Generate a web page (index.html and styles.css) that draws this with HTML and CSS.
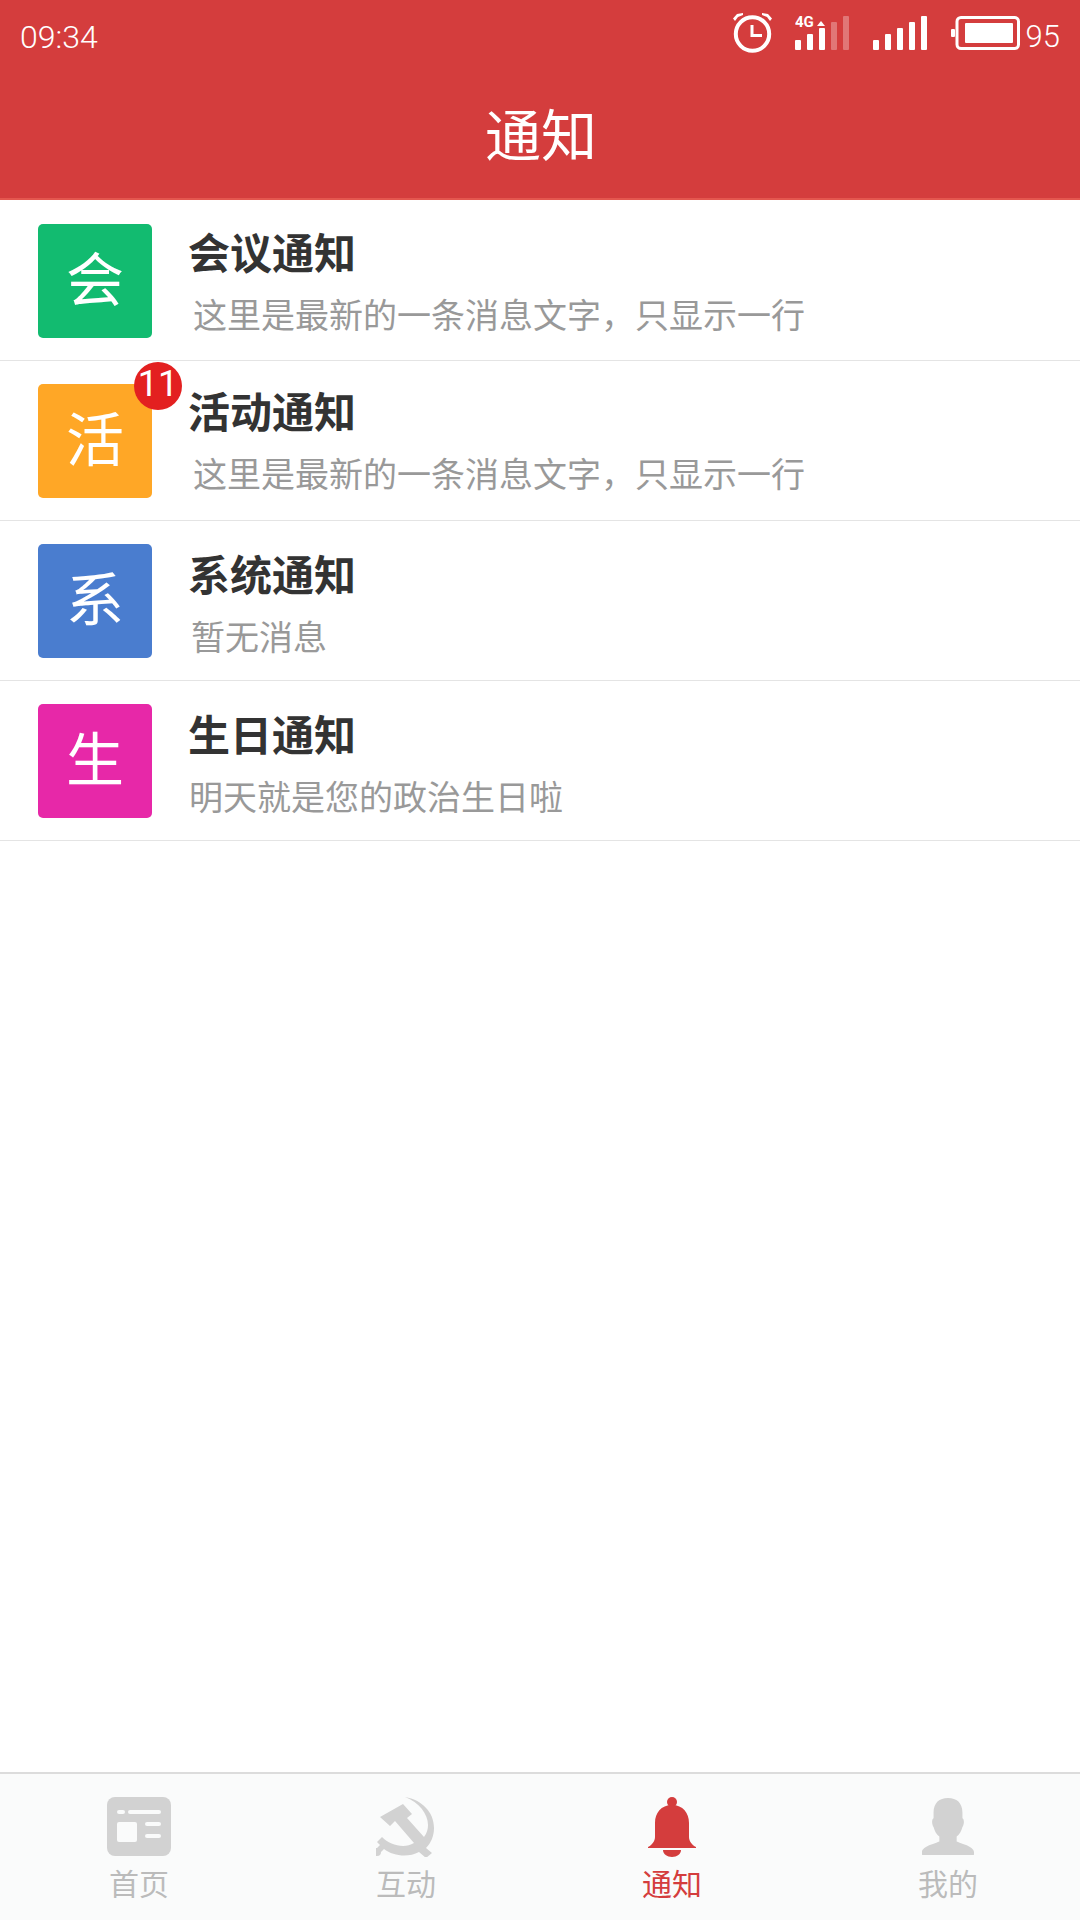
FILE: index.html
```html
<!DOCTYPE html>
<html lang="zh-CN">
<head>
    <meta charset="UTF-8">
    <meta name="viewport" content="width=device-width, initial-scale=1.0">
    <title>通知</title>
    <link rel="stylesheet" href="styles.css">
</head>
<body>
    <div class="app">
        <header class="header">
            <div class="status-bar">
                <span class="time">09:34</span>
                <div class="status-icons">
                    <svg class="icon-alarm" width="40" height="40" viewBox="0 0 40 40">
                        <circle cx="19.500" cy="21" r="16.700" fill="none" stroke="#fff" stroke-width="4"/>
                        <path d="M19 12v10.500h10" fill="none" stroke="#fff" stroke-width="3"/>
                        <path d="M0 5.500 4 1 10 0 10 2 5 4 2 8zM39 5.500 35 1 29 0 29 2 34 4 37 8z" fill="#fff"/>
                    </svg>
                    <svg class="icon-signal-4g" width="54" height="40" viewBox="0 0 54 40">
                        <text x="0" y="14" class="net-label">4G</text>
                        <path d="M22 13l4-5 4 5z" fill="#fff"/>
                        <rect x="0" y="27" width="6" height="10" rx="1" fill="#fff"/>
                        <rect x="12" y="21" width="6" height="16" rx="1" fill="#fff"/>
                        <rect x="24" y="15" width="6" height="22" rx="1" fill="#fff"/>
                        <rect x="36" y="9" width="6" height="28" rx="1" fill="#fff" fill-opacity=".3"/>
                        <rect x="48" y="3" width="6" height="34" rx="1" fill="#fff" fill-opacity=".3"/>
                    </svg>
                    <svg class="icon-signal" width="54" height="34" viewBox="0 0 54 34">
                        <rect x="0" y="24" width="6" height="10" rx="1" fill="#fff"/>
                        <rect x="12" y="18" width="6" height="16" rx="1" fill="#fff"/>
                        <rect x="24" y="12" width="6" height="22" rx="1" fill="#fff"/>
                        <rect x="36" y="6" width="6" height="28" rx="1" fill="#fff"/>
                        <rect x="48" y="0" width="6" height="34" rx="1" fill="#fff"/>
                    </svg>
                    <svg class="icon-battery" width="69" height="34" viewBox="0 0 69 34">
                        <rect x="6" y="1.500" width="61.500" height="31" rx="4" fill="none" stroke="#fff" stroke-width="3"/>
                        <rect x="14" y="7" width="48" height="20" rx="1" fill="#fff"/>
                        <rect x="0" y="13" width="4" height="8" rx="1" fill="#fff"/>
                    </svg>
                    <span class="battery-level">95</span>
                </div>
            </div>
            <h1 class="title">通知</h1>
        </header>

        <ul class="notice-list">
            <li class="notice notice-meeting">
                <div class="avatar avatar-green">会</div>
                <div class="notice-body">
                    <div class="notice-title">会议通知</div>
                    <div class="notice-text">这里是最新的一条消息文字，只显示一行</div>
                </div>
            </li>
            <li class="notice notice-activity">
                <div class="avatar avatar-orange">活<span class="badge">11</span></div>
                <div class="notice-body">
                    <div class="notice-title">活动通知</div>
                    <div class="notice-text">这里是最新的一条消息文字，只显示一行</div>
                </div>
            </li>
            <li class="notice">
                <div class="avatar avatar-blue">系</div>
                <div class="notice-body">
                    <div class="notice-title">系统通知</div>
                    <div class="notice-text notice-text-empty">暂无消息</div>
                </div>
            </li>
            <li class="notice">
                <div class="avatar avatar-pink">生</div>
                <div class="notice-body">
                    <div class="notice-title">生日通知</div>
                    <div class="notice-text notice-text-birthday">明天就是您的政治生日啦</div>
                </div>
            </li>
        </ul>

        <nav class="tabbar">
            <div class="tab tab-home">
                <svg width="64" height="60" viewBox="0 0 64 60">
                    <rect x="0" y="0" width="64" height="59" rx="8" fill="#d2d2d2"/>
                    <rect x="10" y="13" width="8" height="4" rx="2" fill="#fafbfb"/>
                    <rect x="21" y="13" width="33" height="4" rx="2" fill="#fafbfb"/>
                    <rect x="10" y="25" width="20" height="20" rx="2" fill="#fafbfb"/>
                    <rect x="38" y="25" width="16" height="4" rx="2" fill="#fafbfb"/>
                    <rect x="38" y="37" width="16" height="4" rx="2" fill="#fafbfb"/>
                </svg>
                <span>首页</span>
            </div>
            <div class="tab tab-talk">
                <svg width="60" height="60" viewBox="0 0 60 60">
                    <path d="M29 0C46 3 58 15 58 31c0 8-3 15-8 20l6 5-6 5-7-6c-11 6-26 4-35-3l-3 3a4 4 0 1 1-4-4l3-3-3-3 5-5c8 8 22 12 32 6L19 24l-5 5L4 20 27 7l9 10-5 4 17 19c3-4 4-8 4-12 0-11-9-23-23-28z" fill="#d2d2d2"/>
                </svg>
                <span>互动</span>
            </div>
            <div class="tab tab-active">
                <svg width="48" height="60" viewBox="0 0 48 60">
                    <circle cx="24" cy="5" r="5" fill="#d43d3d"/>
                    <path d="M24 8C13 8 7 16 7 26v14c0 4-3 8-7 10v1h48v-1c-4-2-7-6-7-10V26C41 16 35 8 24 8z" fill="#d43d3d"/>
                    <path d="M15 53h18c0 4-4 7-9 7s-9-3-9-7z" fill="#d43d3d"/>
                </svg>
                <span>通知</span>
            </div>
            <div class="tab tab-mine">
                <svg width="52" height="58" viewBox="0 0 54 60">
                    <path d="M27 1c9 0 15 5 15 15v6c2 1 2 6 0 9-1 4-3 8-6 10v5c4 2 18 5 18 11v2a2 2 0 0 1-2 2H2a2 2 0 0 1-2-2v-2c0-6 14-9 18-11v-5c-3-2-5-6-6-10-2-3-2-8 0-9v-6C12 6 18 1 27 1z" fill="#d2d2d2"/>
                </svg>
                <span class="tab-mine-label">我的</span>
            </div>
        </nav>
    </div>
</body>
</html>
```

FILE: styles.css
```css
* {
    box-sizing: border-box;
}
body, html {
    margin: 0;
    padding: 0;
    background: #fff;
    font-family: "Noto Sans CJK SC", "Noto Sans", sans-serif;
}
.app {
    width: 1080px;
    height: 1920px;
    display: flex;
    flex-direction: column;
}
.header {
    height: 200px;
    background: #d43d3d;
    border-bottom: 2px solid #e4574f;
    color: #fff;
}
.status-bar {
    height: 70px;
    padding: 13px 20px 0;
    display: flex;
    justify-content: space-between;
}
.time {
    font-family: Roboto, sans-serif;
    font-weight: 300;
    font-size: 32px;
    line-height: 48px;
}
.status-icons {
    display: flex;
    align-items: flex-start;
}
.icon-alarm {
    margin-right: 22px;
}
.icon-signal-4g {
    margin-right: 24px;
}
.net-label {
    font-family: Roboto, sans-serif;
    font-weight: 700;
    font-size: 15px;
    fill: #fff;
}
.icon-signal {
    margin-top: 3px;
    margin-right: 24px;
}
.icon-battery {
    margin-top: 3px;
}
.battery-level {
    font-family: Roboto, sans-serif;
    font-weight: 300;
    font-size: 31px;
    line-height: 48px;
    margin-left: 6px;
}
.title {
    margin: 30px 0 0;
    padding-left: 2px;
    font-size: 56px;
    font-weight: 400;
    line-height: 64px;
    text-align: center;
}
.notice-list {
    list-style: none;
    margin: 0;
    padding: 1px 0 0;
    flex: 1;
}
.notice {
    height: 160px;
    padding: 23px 0 0 38px;
    border-bottom: 1px solid #e4e4e4;
    display: flex;
}
.avatar {
    position: relative;
    width: 114px;
    height: 114px;
    border-radius: 5px;
    color: #fff;
    font-size: 58px;
    line-height: 104px;
    text-align: center;
}
.avatar-green {
    background: #12bb70;
}
.avatar-orange {
    background: #ffa726;
}
.avatar-blue {
    background: #4a7dcf;
}
.avatar-pink {
    background: #e728a8;
}
.badge {
    position: absolute;
    top: -22px;
    right: -30px;
    width: 48px;
    height: 48px;
    border-radius: 50%;
    background: #e32020;
    font-family: Roboto, sans-serif;
    font-size: 36px;
    font-weight: 400;
    line-height: 45px;
}
.notice-body {
    margin-left: 36px;
    margin-top: 3px;
}
.notice-meeting .notice-body {
    margin-top: 1px;
}
.notice-activity .notice-body {
    margin-top: 0;
}
.notice-title {
    font-size: 42px;
    font-weight: 700;
    line-height: 52px;
    color: #333;
}
.notice-text {
    font-size: 34px;
    line-height: 50px;
    margin-top: 12px;
    margin-left: 5px;
    color: #999;
}
.notice-text-empty {
    margin-left: 3px;
}
.notice-text-birthday {
    margin-left: 1px;
}
.tabbar {
    height: 148px;
    background: #fafbfb;
    border-top: 2px solid #dcdcdc;
    display: flex;
}
.tab {
    width: 270px;
    padding-top: 23px;
    display: flex;
    flex-direction: column;
    align-items: center;
    font-size: 30px;
    line-height: 40px;
    color: #bbb;
}
.tab span {
    margin-top: 5px;
}
.tab-home {
    padding-left: 8px;
}
.tab-talk {
    padding-left: 2px;
}
.tab-active {
    padding-right: 6px;
    color: #d43d3d;
}
.tab-mine {
    padding-left: 6px;
}
.tab .tab-mine-label {
    margin-top: 7px;
}
```
